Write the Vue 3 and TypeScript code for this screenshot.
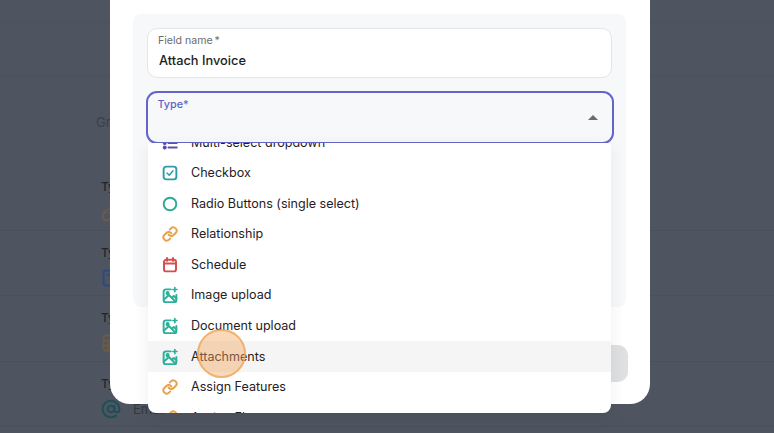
<script setup lang="ts">
interface Opt { label: string; icon: string; active?: boolean }
const options: Opt[] = [
  { label: 'Multi-select dropdown', icon: 'list' },
  { label: 'Checkbox', icon: 'check' },
  { label: 'Radio Buttons (single select)', icon: 'radio' },
  { label: 'Relationship', icon: 'link' },
  { label: 'Schedule', icon: 'calendar' },
  { label: 'Image upload', icon: 'image' },
  { label: 'Document upload', icon: 'image' },
  { label: 'Attachments', icon: 'image', active: true },
  { label: 'Assign Features', icon: 'link' },
  { label: 'Assign Elements', icon: 'link' },
]
const bgRows = [
  { kind: 'link', text: '' },
  { kind: 'text', text: '' },
  { kind: 'table', text: '' },
  { kind: 'at', text: 'Email' },
]
</script>

<template>
  <div class="page">
    <div class="bg">
      <div class="bg-head one"></div>
      <div class="bg-head two"></div>
      <div class="group">Group</div>
      <div v-for="(r, i) in bgRows" :key="i" class="bg-row">
        <div class="bg-type">Type</div>
        <div class="bg-val">
          <svg width="20" height="20" viewBox="0 0 24 24" fill="none" stroke-width="2.4" stroke-linecap="round" stroke-linejoin="round" :class="'bgi-' + r.kind">
            <template v-if="r.kind === 'link'">
              <path d="M10 13a5 5 0 0 0 7.54.54l3-3a5 5 0 0 0-7.07-7.07l-1.72 1.71" /><path d="M14 11a5 5 0 0 0-7.54-.54l-3 3a5 5 0 0 0 7.07 7.07l1.71-1.71" />
            </template>
            <template v-else-if="r.kind === 'text'">
              <rect x="3" y="3" width="18" height="18" rx="3" /><path d="M8 8h8M12 8v9" />
            </template>
            <template v-else-if="r.kind === 'table'">
              <rect x="3" y="3" width="18" height="18" rx="3" /><path d="M3 9h18M3 15h18M9 9v12" />
            </template>
            <template v-else>
              <circle cx="12" cy="12" r="4" /><path d="M16 8v5a3 3 0 0 0 6 0v-1a10 10 0 1 0-4 8" />
            </template>
          </svg>
          <span>{{ r.text }}</span>
        </div>
      </div>
    </div>

    <div class="modal">
      <div class="panel">
        <div class="field">
          <label class="f-label">Field name&#8201;*</label>
          <div class="f-value">Attach Invoice</div>
        </div>
        <div class="select">
          <label class="s-label">Type*</label>
          <span class="arrow"></span>
        </div>
      </div>
      <div class="footer"><div class="btn"></div></div>
    </div>

    <div class="dropdown">
      <ul class="list">
        <li v-for="o in options" :key="o.label" class="opt" :class="{ active: o.active }">
          <svg class="ic" :class="'ic-' + o.icon" width="18" height="18" viewBox="0 0 24 24" fill="none" stroke="currentColor" stroke-width="2.6" stroke-linecap="round" stroke-linejoin="round">
            <template v-if="o.icon === 'list'">
              <path d="M10 6h11M10 12h11M10 18h11" /><circle cx="5" cy="6" r="1.4" /><circle cx="5" cy="12" r="1.4" /><circle cx="5" cy="18" r="1.4" />
            </template>
            <template v-else-if="o.icon === 'check'">
              <rect x="3.5" y="3.5" width="17" height="17" rx="3.5" /><path d="M8 12l3 3 5-6" stroke-width="2" />
            </template>
            <template v-else-if="o.icon === 'radio'">
              <circle cx="12" cy="12" r="8.4" />
            </template>
            <template v-else-if="o.icon === 'link'">
              <g transform="translate(12 12) scale(.88) translate(-12 -12)" stroke-width="3">
                <path d="M10 13a5 5 0 0 0 7.54.54l3-3a5 5 0 0 0-7.07-7.07l-1.72 1.71" /><path d="M14 11a5 5 0 0 0-7.54-.54l-3 3a5 5 0 0 0 7.07 7.07l1.71-1.71" />
              </g>
            </template>
            <template v-else-if="o.icon === 'calendar'">
              <rect x="4" y="5" width="16" height="15.5" rx="3" /><path d="M8 2.5v4M16 2.5v4M4 10h16" />
            </template>
            <template v-else>
              <path d="M13 4.5H6.5a3 3 0 0 0-3 3v11a3 3 0 0 0 3 3h11a3 3 0 0 0 3-3V12" /><path d="M18.5 2v5.5M15.8 4.7h5.5" stroke-width="2.2" /><circle cx="8.8" cy="9.5" r="1.4" fill="currentColor" /><path d="M4 18l6.5-6 9 9M14.5 15.2l2.5-2 3.5 3.5" />
            </template>
          </svg>
          <span>{{ o.label }}</span>
        </li>
      </ul>
    </div>

    <div class="cursor"></div>
  </div>
</template>

<style>
html, body { margin: 0; padding: 0; background: #4f5560; }
</style>

<style scoped>
.page {
  position: relative;
  width: 774px;
  height: 433px;
  overflow: hidden;
  background: #4f5560;
  font-family: Inter, "Liberation Sans", sans-serif;
}
.bg { color: #2d3139; font-size: 13px; }
.bg-head { box-sizing: border-box; border-bottom: 1px solid #4c525c; }
.bg-head.one { height: 23px; }
.bg-head.two { height: 53px; }
.group { color: #3a3f48; height: 89px; line-height: 18px; padding: 37px 0 0 96px; box-sizing: border-box; }
.bg-row {
  height: 65.5px;
  padding-left: 101px;
  box-sizing: border-box;
  border-bottom: 1px solid #4a505a;
}
.bg-type { font-weight: 500; color: #22252b; font-size: 12px; line-height: 16px; padding-top: 14px; }
.bg-val { display: flex; align-items: center; gap: 12px; margin-top: 7px; color: #33383f; }
.bgi-link { stroke: #6e5a4a; }
.bgi-text { stroke: #2a4a80; }
.bgi-table { stroke: #6b5a48; }
.bgi-at { stroke: #1d4f57; }

.modal {
  position: absolute;
  left: 110px;
  top: -40px;
  width: 540px;
  height: 444px;
  background: #fff;
  border-radius: 0 0 20px 20px;
  box-sizing: border-box;
  padding: 54px 24px 0 23px;
  display: flex;
  flex-direction: column;
}
.panel {
  width: 493px;
  height: 293px;
  box-sizing: border-box;
  background: #f7f8fa;
  border-radius: 8px;
  padding: 14px 14px 0;
  display: flex;
  flex-direction: column;
  gap: 13px;
}
.field {
  height: 50px;
  box-sizing: border-box;
  background: #fff;
  border: 1px solid #e4e5e7;
  border-radius: 10px;
  padding: 4px 10px 0;
}
.f-label { display: block; font-size: 10.6px; line-height: 15px; color: #6a6d72; }
.f-value { font-size: 12.8px; font-weight: 500; color: #1c1e21; line-height: 18px; margin: 4px 0 0 1px; }
.select {
  position: relative;
  height: 53px;
  margin: 0 -1.5px;
  box-sizing: border-box;
  background: #f7f8fa;
  border: 2px solid #6366c8;
  border-radius: 11px;
  padding: 4px 10px 0;
}
.s-label { display: block; font-size: 10.8px; font-weight: 500; line-height: 15px; color: #5f63c6; }
.arrow {
  position: absolute;
  right: 14px;
  top: 22px;
  width: 0;
  height: 0;
  border-left: 5px solid transparent;
  border-right: 5px solid transparent;
  border-bottom: 5px solid #6b6b6b;
}
.footer { display: flex; justify-content: flex-end; margin-top: 38px; margin-right: -2px; }
.btn { width: 200px; height: 37px; border-radius: 10px; background: #dfe0e2; }

.dropdown {
  position: absolute;
  left: 148px;
  top: 143px;
  width: 463px;
  height: 270px;
  overflow: hidden;
  background: #fff;
  border-radius: 0 0 8px 8px;
  box-shadow: 0 4px 16px rgba(0, 0, 0, 0.07);
}
.list { list-style: none; margin: -15.8px 0 0; padding: 0; }
.opt {
  display: flex;
  align-items: center;
  height: 30.6px;
  padding-left: 13px;
  gap: 12px;
  font-size: 12.55px;
  line-height: 18px;
  color: #1f2124;
}
.opt.active { background: #f5f5f5; }
.ic { flex: none; }
.ic-list { color: #5a4fb0; }
.ic-check { color: #2f9bab; }
.ic-radio { color: #2eab95; }
.ic-link { color: #e6a24c; }
.ic-calendar { color: #d44f4f; }
.ic-image { color: #2cb09a; }

.cursor {
  position: absolute;
  left: 197px;
  top: 329px;
  width: 49px;
  height: 49px;
  box-sizing: border-box;
  border-radius: 50%;
  background: rgba(243, 163, 90, 0.42);
  border: 2px solid rgba(236, 165, 92, 0.75);
}
</style>
